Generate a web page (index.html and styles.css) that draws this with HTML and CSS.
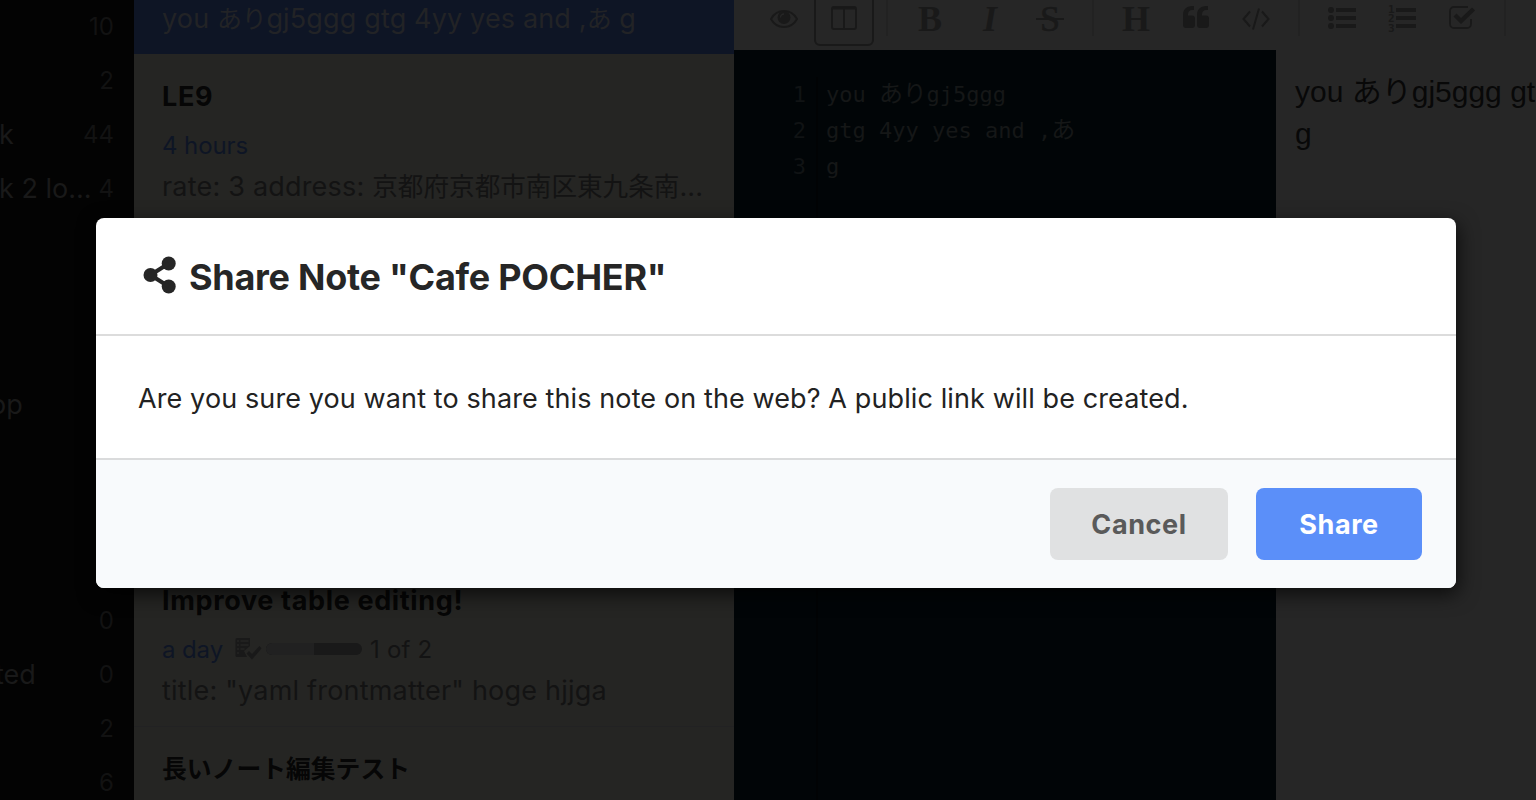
FILE: index.html
```html
<!DOCTYPE html>
<html lang="en">
<head>
<meta charset="utf-8">
<title>Share Note</title>
<link rel="stylesheet" href="styles.css">
</head>
<body>
<div class="app">
  <aside class="sidebar">
    <div class="row"><span class="name"></span><span class="count">10</span></div>
    <div class="row"><span class="name"></span><span class="count">2</span></div>
    <div class="row"><span class="name">k</span><span class="count">44</span></div>
    <div class="row"><span class="name">k 2 lo...</span><span class="count">4</span></div>
    <div class="row"></div>
    <div class="row"></div>
    <div class="row"></div>
    <div class="row"><span class="name name-op">op</span></div>
    <div class="row"></div>
    <div class="row"></div>
    <div class="row"></div>
    <div class="row"><span class="name"></span><span class="count">0</span></div>
    <div class="row"><span class="name name-ted">ted</span><span class="count">0</span></div>
    <div class="row"><span class="name"></span><span class="count">2</span></div>
    <div class="row"><span class="name"></span><span class="count">6</span></div>
  </aside>

  <section class="notes">
    <article class="note selected">
      <h2 class="note-title"></h2>
      <div class="note-meta"></div>
      <p class="note-text">you <span class="kana">あり</span>gj5ggg gtg 4yy yes and ,<span class="kana">あ</span> g</p>
    </article>
    <article class="note">
      <h2 class="note-title">LE9</h2>
      <div class="note-meta"><span class="ago">4 hours</span></div>
      <p class="note-text">rate: 3 address: <span class="jp">京都府京都市南区東九条南</span>...</p>
    </article>
    <article class="note"></article>
    <article class="note"></article>
    <article class="note">
      <h2 class="note-title">Improve table editing!</h2>
      <div class="note-meta">
        <span class="ago">a day</span>
        <svg class="tasks-icon" width="28" height="24" viewBox="0 0 28 24">
          <path fill="#191919" d="M2 1h13v8l-6 5 3 6H2a1.500 1.500 0 0 1-1.500-1.500v-16A1.500 1.500 0 0 1 2 1z"/>
          <path fill="#191919" d="M11.500 16.500l2.500-2.500 3 3 7.500-8 2 2.500L17 22.500z"/>
          <path stroke="#252523" stroke-width="1.300" d="M2 4h2M2 8h2M2 12h2M2 16h2M5.500 4h8M5.500 8h8M5.500 12h4"/>
        </svg>
        <span class="progress"><span class="progress-done"></span></span>
        <span class="progress-label">1 of 2</span>
      </div>
      <p class="note-text">title: "yaml frontmatter" hoge hjjga</p>
    </article>
    <article class="note">
      <h2 class="note-title note-title-jp">長いノート編集テスト</h2>
    </article>
  </section>

  <main class="main">
    <nav class="toolbar">
      <span class="tool tool-eye"><svg width="28" height="20" viewBox="0 0 28 20"><path fill="none" stroke="#191919" stroke-width="2" d="M1 10C4 4.500 8.500 2 14 2s10 2.500 13 8c-3 5.500-7.500 8-13 8S4 15.500 1 10z"/><circle cx="14" cy="8.500" r="6.500" fill="#191919"/><path d="M10.500 8.500A3.500 3.500 0 0 1 14 5" fill="none" stroke="#262626" stroke-width="1.300"/></svg></span>
      <span class="tool active"><svg width="26" height="24" viewBox="0 0 26 24"><rect x="1" y="1" width="24" height="22" rx="2" fill="none" stroke="#191919" stroke-width="2"/><path d="M1 2.500h24M13 2v21" stroke="#191919" stroke-width="2"/></svg></span>
      <span class="separator"></span>
      <span class="tool letter">B</span>
      <span class="tool letter italic">I</span>
      <span class="tool letter"><span class="strike">S</span></span>
      <span class="separator"></span>
      <span class="tool letter">H</span>
      <span class="tool tool-quote"><svg width="26" height="22" viewBox="0 0 26 22"><path fill="#191919" d="M11 0v4H9.500C6.500 4 5 5.500 5 8.500v1h4a3 3 0 0 1 3 3V19a3 3 0 0 1-3 3H3a3 3 0 0 1-3-3V9c0-5.500 3.500-9 9-9zM25 0v4h-1.500C20.500 4 19 5.500 19 8.500v1h4a3 3 0 0 1 3 3V19a3 3 0 0 1-3 3h-6a3 3 0 0 1-3-3V9c0-5.500 3.500-9 9-9z"/></svg></span>
      <span class="tool"><svg width="28" height="22" viewBox="0 0 28 22"><path fill="none" stroke="#191919" stroke-width="2" d="M8 3.500L1.500 11 8 18.500M20 3.500l6.500 7.500-6.500 7.500M17 .5l-6 21"/></svg></span>
      <span class="separator"></span>
      <span class="tool tool-list"><svg width="28" height="22" viewBox="0 0 28 22"><g fill="#191919"><circle cx="3" cy="3" r="3"/><circle cx="3" cy="11" r="3"/><circle cx="3" cy="19" r="3"/><path d="M8 1h20v4H8zM8 9h20v4H8zM8 17h20v4H8z"/></g></svg></span>
      <span class="tool tool-list"><svg width="28" height="28" viewBox="0 0 28 28"><g fill="#191919"><path d="M8 4h20v4H8zM8 12h20v4H8zM8 20h20v4H8z"/><g class="digits"><text x="0" y="8.500">1</text><text x="0" y="18">2</text><text x="0" y="27.500">3</text></g></g></svg></span>
      <span class="tool tool-check"><svg width="28" height="24" viewBox="0 0 28 24"><path fill="none" stroke="#191919" stroke-width="1.800" d="M20 2H6a4 4 0 0 0-4 4v13a4 4 0 0 0 4 4h13a4 4 0 0 0 4-4v-5"/><path fill="#191919" d="M5.500 11.500l3-3 4.500 4.500 11-10.500 3 3L13 19z"/></svg></span>
      <span class="separator"></span>
      <span class="tool"><svg width="26" height="22" viewBox="0 0 26 22"><path fill="none" stroke="#191919" stroke-width="2" d="M11 6l4-4 5 5-4 5M11 10l-5 4 4 5 5-4"/></svg></span>
    </nav>
    <div class="panes">
      <div class="editor">
        <div class="gutter"><span>1</span><span>2</span><span>3</span></div>
        <div class="code">
          <div>you <span class="wide">あり</span>gj5ggg</div>
          <div>gtg 4yy yes and ,<span class="wide">あ</span></div>
          <div>g</div>
        </div>
      </div>
      <div class="preview">you ありgj5ggg gtg<br>g</div>
    </div>
  </main>
</div>

<div class="modal" role="dialog">
  <header class="modal-header">
    <svg class="share-icon" width="34" height="38" viewBox="0 0 34 38"><g fill="#262626"><circle cx="7.500" cy="19" r="7"/><circle cx="25.700" cy="7.500" r="7"/><circle cx="25.700" cy="30.500" r="7"/></g><path fill="none" stroke="#262626" stroke-width="4.200" d="M25.700 7.500L7.500 19l18.200 11.500"/></svg>
    <h1 class="modal-title">Share Note "Cafe POCHER"</h1>
  </header>
  <div class="modal-body"><span class="message">Are you sure you want to share this note on the web? A public link will be created.</span></div>
  <footer class="modal-footer">
    <button class="button cancel">Cancel</button>
    <button class="button share">Share</button>
  </footer>
</div>
</body>
</html>
```
FILE: styles.css
```css
* { box-sizing: border-box; }
body {
  margin: 0;
  width: 1536px;
  height: 800px;
  overflow: hidden;
  background: #262626;
  font-family: Inter, "Noto Sans CJK JP", sans-serif;
  font-size: 27px;
}
.app { display: flex; width: 1536px; height: 800px; overflow: hidden; white-space: nowrap; }

.sidebar { width: 134px; flex: none; margin-top: -2px; background: #030303; color: #191919; overflow: hidden; }
.row { display: flex; align-items: center; justify-content: space-between; height: 54px; padding-right: 20px; }
.name { font-size: 27px; padding-top: 2px; margin-left: -1px; }
.name-op { margin-left: -10px; }
.name-ted { margin-left: -5px; }
.count { font-size: 24px; color: #121212; padding-top: 2px; }

.notes { width: 600px; flex: none; margin-top: -114px; background: #252523; overflow: hidden; height: 914px; }
.note { height: 168px; padding: 21px 28px 0; border-top: 1px solid #222223; }
.note.selected { background: #0e1525; border-color: #0e1525; }
.selected + .note { border-color: #252523; }
.note-title { margin: 0; height: 42px; line-height: 42px; font-size: 27px; font-weight: 700; letter-spacing: .65px; color: #060606; }
.note-title-jp { font-size: 24.800px; letter-spacing: 0; }
.note-meta { display: flex; align-items: center; height: 38px; margin-top: 8px; font-size: 24px; color: #131313; }
.ago { color: #0e1525; letter-spacing: -.1px; }
.tasks-icon { margin-left: 12px; }
.progress { width: 96px; height: 12px; margin-left: 3px; border-radius: 6px; background: #191919; overflow: hidden; display: flex; }
.progress-done { width: 50%; background: #212121; }
.progress-label { margin-left: 8px; letter-spacing: .2px; }
.note-text { margin: 1px 0 0; height: 44px; line-height: 44px; font-size: 27px; letter-spacing: .2px; color: #131313; }
.selected .note-text { color: #222326; letter-spacing: .15px; }
.kana { font-size: 25px; letter-spacing: -.3px; }
.jp { font-size: 25.600px; letter-spacing: 0; }

.main { flex: 1; min-width: 0; display: flex; flex-direction: column; }
.toolbar { display: flex; flex: none; height: 50px; padding-left: 20px; background: #262626; overflow: hidden; }
.tool { flex: none; display: flex; align-items: center; justify-content: center; width: 60px; height: 60px; margin-top: -14px; padding-top: 6px; color: #191919; }
.tool.active { padding-top: 4px; border: 2px solid #191919; border-radius: 6px; }
.tool-eye { padding-top: 5px; }
.tool-quote { padding-top: 2px; }
.tool-list { padding-top: 4px; }
.tool-check { padding-top: 2px; }
.letter { font-family: "Liberation Serif", serif; font-weight: 700; font-size: 36px; padding-top: 5px; }
.italic { font-style: italic; }
.strike { width: 28px; text-align: center; font-weight: 400; -webkit-text-stroke: .6px #191919; background: linear-gradient(#191919, #191919) 0 20px / 28px 2px no-repeat; }
.digits { font: 700 11px "DejaVu Sans Mono", monospace; }
.separator { flex: none; width: 2px; height: 36px; margin: 0 12px; background: #222222; }
.panes { display: flex; flex: 1; }
.editor { display: flex; width: 542px; flex: none; padding-top: 27px; background: #010507; font-family: "DejaVu Sans Mono", "Noto Sans CJK JP", monospace; font-size: 22px; line-height: 36px; color: #151717; }
.gutter { display: flex; flex-direction: column; align-items: flex-end; width: 84px; padding-right: 10px; border-right: 2px solid #010304; color: #101314; }
.code { padding-left: 8px; }
.code div { height: 36px; }
.wide { font-size: 24px; line-height: 1; letter-spacing: -.2px; }
.preview { padding: 21px 0 0 19px; font-family: "Liberation Sans", "Noto Sans CJK JP", sans-serif; font-size: 30px; line-height: 42px; color: #080808; }

.modal {
  position: absolute;
  left: 96px;
  top: 218px;
  width: 1360px;
  height: 370px;
  display: flex;
  flex-direction: column;
  border-radius: 8px;
  background: #fff;
  overflow: hidden;
  box-shadow: 2px 6px 20px rgba(0, 0, 0, .7);
}
.modal-header { display: flex; align-items: center; height: 118px; padding: 0 47px; border-bottom: 2px solid #dcdcdc; }
.share-icon { margin-top: -3px; }
.modal-title { margin: 2px 0 0 12px; font-size: 36px; font-weight: 700; letter-spacing: -.27px; color: #262626; }
.modal-body { display: flex; align-items: center; height: 124px; padding: 2px 42px 0; border-bottom: 2px solid #dadbdc; color: #222; font-size: 27px; letter-spacing: .11px; white-space: nowrap; }
.modal-footer { flex: 1; display: flex; align-items: center; justify-content: flex-end; gap: 28px; padding-right: 34px; background: #f8fafc; }
.button { height: 72px; padding: 0; border: 0; border-radius: 8px; font: 700 27px Inter, sans-serif; letter-spacing: .6px; }
.cancel { width: 178px; background: #e0e1e2; color: #5a5a5a; }
.share { width: 166px; background: #5b8ff9; color: #fff; }
```
